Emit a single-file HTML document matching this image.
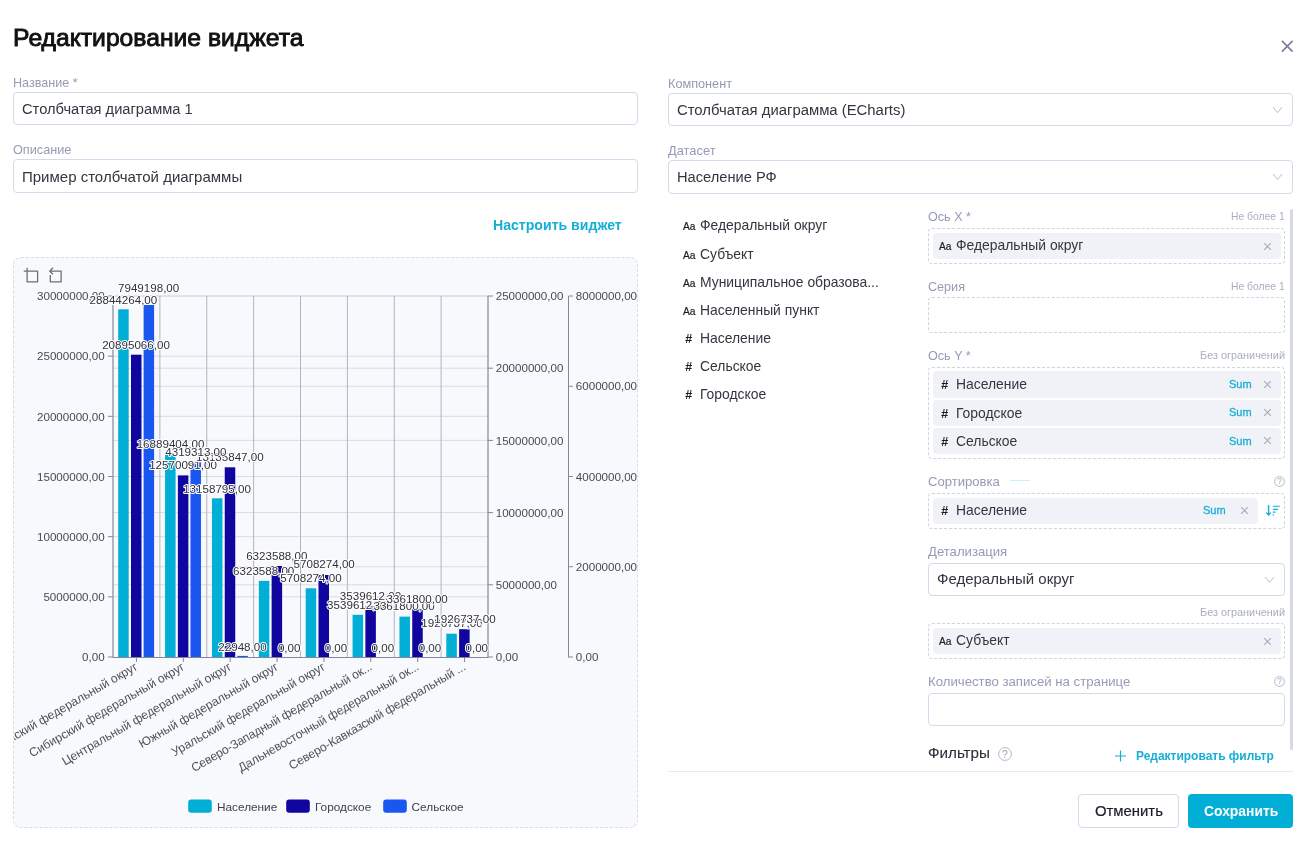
<!DOCTYPE html>
<html><head><meta charset="utf-8"><style>
html,body{margin:0;padding:0;background:#fff;}
body{width:1311px;height:841px;position:relative;overflow:hidden;font-family:"Liberation Sans", sans-serif;}
.t{position:absolute;white-space:pre;line-height:1;font-family:"Liberation Sans", sans-serif;will-change:transform;}
svg{will-change:transform;}
</style></head><body>
<div class="t" style="left:13.40px;top:26px;font-size:24.7px;color:#111111;font-weight:400;-webkit-text-stroke:0.9px #111111;">Редактирование виджета</div>
<svg style="position:absolute;left:1279px;top:38px" width="17" height="17" viewBox="0 0 17 17"><path d="M2.9 2.9L13.6 13.6M13.6 2.9L2.9 13.6" stroke="#737a98" stroke-width="1.5" fill="none"/></svg>
<div class="t" style="left:13.20px;top:77px;font-size:12.6px;color:#959ab6;font-weight:400;">Название *</div>
<div style="position:absolute;left:13px;top:92px;width:625px;height:33px;box-sizing:border-box;border:1px solid #d5d9eb;border-radius:4px;"></div>
<div class="t" style="left:22.00px;top:102px;font-size:14.67px;color:#33363f;font-weight:400;">Столбчатая диаграмма 1</div>
<div class="t" style="left:13.10px;top:144px;font-size:12.69px;color:#959ab6;font-weight:400;">Описание</div>
<div style="position:absolute;left:13px;top:159px;width:625px;height:34px;box-sizing:border-box;border:1px solid #d5d9eb;border-radius:4px;"></div>
<div class="t" style="left:21.60px;top:169px;font-size:15.0px;color:#33363f;font-weight:400;">Пример столбчатой диаграммы</div>
<div class="t" style="left:493.00px;top:218px;font-size:14.1px;color:#16aed6;font-weight:700;">Настроить виджет</div>
<div class="t" style="left:668.20px;top:78px;font-size:12.69px;color:#959ab6;font-weight:400;">Компонент</div>
<div style="position:absolute;left:668px;top:93px;width:625px;height:33px;box-sizing:border-box;border:1px solid #d5d9eb;border-radius:4px;"></div>
<div class="t" style="left:676.50px;top:103px;font-size:14.87px;color:#33363f;font-weight:400;">Столбчатая диаграмма (ECharts)</div>
<svg style="position:absolute;left:1272px;top:105.6px" width="11" height="7.6000000000000085"><path d="M1 1L5.5 6.6000000000000085L10 1" stroke="#b9bdd2" stroke-width="1" fill="none"/></svg>
<div class="t" style="left:668.20px;top:145px;font-size:12.9px;color:#959ab6;font-weight:400;">Датасет</div>
<div style="position:absolute;left:668px;top:160px;width:625px;height:34px;box-sizing:border-box;border:1px solid #d5d9eb;border-radius:4px;"></div>
<div class="t" style="left:676.50px;top:170px;font-size:14.67px;color:#33363f;font-weight:400;">Население РФ</div>
<svg style="position:absolute;left:1272px;top:172.8px" width="11" height="7.599999999999994"><path d="M1 1L5.5 6.599999999999994L10 1" stroke="#b9bdd2" stroke-width="1" fill="none"/></svg>
<div class="t" style="left:683.00px;top:222px;font-size:10.2px;color:#1c1c22;font-weight:400;-webkit-text-stroke:0.2px #1c1c22;">Aa</div>
<div class="t" style="left:699.70px;top:219px;font-size:13.9px;color:#33363f;font-weight:400;">Федеральный округ</div>
<div class="t" style="left:683.00px;top:251px;font-size:10.2px;color:#1c1c22;font-weight:400;-webkit-text-stroke:0.2px #1c1c22;">Aa</div>
<div class="t" style="left:699.70px;top:248px;font-size:13.9px;color:#33363f;font-weight:400;">Субъект</div>
<div class="t" style="left:683.00px;top:279px;font-size:10.2px;color:#1c1c22;font-weight:400;-webkit-text-stroke:0.2px #1c1c22;">Aa</div>
<div class="t" style="left:699.70px;top:276px;font-size:13.9px;color:#33363f;font-weight:400;">Муниципальное образова...</div>
<div class="t" style="left:683.00px;top:307px;font-size:10.2px;color:#1c1c22;font-weight:400;-webkit-text-stroke:0.2px #1c1c22;">Aa</div>
<div class="t" style="left:699.70px;top:304px;font-size:13.9px;color:#33363f;font-weight:400;">Населенный пункт</div>
<div class="t" style="left:685.30px;top:333px;font-size:12.6px;color:#1c1c22;font-weight:700;font-style:italic;">#</div>
<div class="t" style="left:699.70px;top:332px;font-size:13.9px;color:#33363f;font-weight:400;">Население</div>
<div class="t" style="left:685.30px;top:361px;font-size:12.6px;color:#1c1c22;font-weight:700;font-style:italic;">#</div>
<div class="t" style="left:699.70px;top:360px;font-size:13.9px;color:#33363f;font-weight:400;">Сельское</div>
<div class="t" style="left:685.30px;top:389px;font-size:12.6px;color:#1c1c22;font-weight:700;font-style:italic;">#</div>
<div class="t" style="left:699.70px;top:388px;font-size:13.9px;color:#33363f;font-weight:400;">Городское</div>
<div class="t" style="left:928.30px;top:211px;font-size:12.6px;color:#959ab6;font-weight:400;">Ось X *</div>
<div class="t" style="right:26.50px;top:212px;font-size:10.34px;color:#a9adc2;font-weight:400;">Не более 1</div>
<div style="position:absolute;left:928px;top:228px;width:357px;height:36px;box-sizing:border-box;border:1px dashed #cfd3e4;border-radius:4px;"></div>
<div style="position:absolute;left:933px;top:233px;width:348px;height:26px;box-sizing:border-box;background:#f0f2f7;border-radius:4px;"></div>
<div class="t" style="left:939.00px;top:242px;font-size:10.2px;color:#1c1c22;font-weight:400;-webkit-text-stroke:0.2px #1c1c22;">Aa</div>
<div class="t" style="left:955.80px;top:239px;font-size:13.9px;color:#33363f;font-weight:400;">Федеральный округ</div>
<svg style="position:absolute;left:1264px;top:242.5px" width="7" height="7.0" viewBox="0 0 7 7.0"><path d="M0 0L7 7.0M7 0L0 7.0" stroke="#a5a9bf" stroke-width="1.1" fill="none"/></svg>
<div class="t" style="left:928.30px;top:281px;font-size:12.6px;color:#959ab6;font-weight:400;">Серия</div>
<div class="t" style="right:26.50px;top:282px;font-size:10.34px;color:#a9adc2;font-weight:400;">Не более 1</div>
<div style="position:absolute;left:928px;top:297px;width:357px;height:36px;box-sizing:border-box;border:1px dashed #cfd3e4;border-radius:4px;"></div>
<div class="t" style="left:928.30px;top:350px;font-size:12.6px;color:#959ab6;font-weight:400;">Ось Y *</div>
<div class="t" style="right:26.40px;top:350px;font-size:10.89px;color:#a9adc2;font-weight:400;">Без ограничений</div>
<div style="position:absolute;left:928px;top:367px;width:357px;height:91.5px;box-sizing:border-box;border:1px dashed #cfd3e4;border-radius:4px;"></div>
<div style="position:absolute;left:933px;top:371px;width:348px;height:27px;box-sizing:border-box;background:#f0f2f7;border-radius:4px;"></div>
<div class="t" style="left:941.00px;top:379px;font-size:12.6px;color:#1c1c22;font-weight:700;font-style:italic;">#</div>
<div class="t" style="left:955.70px;top:378px;font-size:13.9px;color:#33363f;font-weight:400;">Население</div>
<div class="t" style="left:1229.30px;top:379px;font-size:11px;color:#16aed6;font-weight:400;-webkit-text-stroke:0.3px #16aed6;">Sum</div>
<svg style="position:absolute;left:1264px;top:381px" width="7" height="7" viewBox="0 0 7 7"><path d="M0 0L7 7M7 0L0 7" stroke="#a5a9bf" stroke-width="1.1" fill="none"/></svg>
<div style="position:absolute;left:933px;top:400px;width:348px;height:26px;box-sizing:border-box;background:#f0f2f7;border-radius:4px;"></div>
<div class="t" style="left:941.00px;top:408px;font-size:12.6px;color:#1c1c22;font-weight:700;font-style:italic;">#</div>
<div class="t" style="left:955.70px;top:407px;font-size:13.9px;color:#33363f;font-weight:400;">Городское</div>
<div class="t" style="left:1229.30px;top:407px;font-size:11px;color:#16aed6;font-weight:400;-webkit-text-stroke:0.3px #16aed6;">Sum</div>
<svg style="position:absolute;left:1264px;top:409px" width="7" height="7" viewBox="0 0 7 7"><path d="M0 0L7 7M7 0L0 7" stroke="#a5a9bf" stroke-width="1.1" fill="none"/></svg>
<div style="position:absolute;left:933px;top:428px;width:348px;height:26px;box-sizing:border-box;background:#f0f2f7;border-radius:4px;"></div>
<div class="t" style="left:941.00px;top:436px;font-size:12.6px;color:#1c1c22;font-weight:700;font-style:italic;">#</div>
<div class="t" style="left:955.70px;top:435px;font-size:13.9px;color:#33363f;font-weight:400;">Сельское</div>
<div class="t" style="left:1229.30px;top:436px;font-size:11px;color:#16aed6;font-weight:400;-webkit-text-stroke:0.3px #16aed6;">Sum</div>
<svg style="position:absolute;left:1264px;top:437px" width="7" height="7" viewBox="0 0 7 7"><path d="M0 0L7 7M7 0L0 7" stroke="#a5a9bf" stroke-width="1.1" fill="none"/></svg>
<div class="t" style="left:928.30px;top:475px;font-size:13.1px;color:#959ab6;font-weight:400;">Сортировка</div>
<div style="position:absolute;left:1010.3px;top:480px;width:19.5px;height:1px;box-sizing:border-box;background:#cdeef7;"></div>
<svg style="position:absolute;left:1274px;top:476px" width="11" height="11" viewBox="0 0 11 11"><circle cx="5.5" cy="5.5" r="4.9" stroke="#b3b7c9" stroke-width="1" fill="none"/><text x="5.5" y="8.47" text-anchor="middle" font-family="Liberation Sans" font-size="8.25" fill="#9ea2b8">?</text></svg>
<div style="position:absolute;left:928px;top:493px;width:357px;height:36px;box-sizing:border-box;border:1px dashed #cfd3e4;border-radius:4px;"></div>
<div style="position:absolute;left:933px;top:498px;width:325px;height:26px;box-sizing:border-box;background:#f0f2f7;border-radius:4px;"></div>
<div class="t" style="left:941.00px;top:505px;font-size:12.6px;color:#1c1c22;font-weight:700;font-style:italic;">#</div>
<div class="t" style="left:955.70px;top:504px;font-size:13.9px;color:#33363f;font-weight:400;">Население</div>
<div class="t" style="left:1203.00px;top:505px;font-size:11px;color:#16aed6;font-weight:400;-webkit-text-stroke:0.3px #16aed6;">Sum</div>
<svg style="position:absolute;left:1241px;top:507px" width="7" height="7" viewBox="0 0 7 7"><path d="M0 0L7 7M7 0L0 7" stroke="#a5a9bf" stroke-width="1.1" fill="none"/></svg>
<svg style="position:absolute;left:1265px;top:504px" width="16" height="13" viewBox="0 0 16 13"><path d="M3.6 1V10.8M1.4 8.6L3.6 11L5.8 8.6" stroke="#16aed6" stroke-width="1.4" fill="none"/><path d="M7.9 2.3H14.8M7.9 5.4H13M7.9 8.1H10.6" stroke="#16aed6" stroke-width="1.1" fill="none"/><circle cx="8.3" cy="11" r="0.7" fill="#16aed6"/></svg>
<div class="t" style="left:928.20px;top:545px;font-size:13.13px;color:#959ab6;font-weight:400;">Детализация</div>
<div style="position:absolute;left:928px;top:562.5px;width:357px;height:33.0px;box-sizing:border-box;border:1px solid #d5d9eb;border-radius:4px;"></div>
<div class="t" style="left:936.90px;top:571px;font-size:15.0px;color:#33363f;font-weight:400;">Федеральный округ</div>
<svg style="position:absolute;left:1264px;top:576px" width="11" height="7.2999999999999545"><path d="M1 1L5.5 6.2999999999999545L10 1" stroke="#b9bdd2" stroke-width="1" fill="none"/></svg>
<div class="t" style="right:26.40px;top:607px;font-size:10.89px;color:#a9adc2;font-weight:400;">Без ограничений</div>
<div style="position:absolute;left:928px;top:623px;width:357px;height:35.5px;box-sizing:border-box;border:1px dashed #cfd3e4;border-radius:4px;"></div>
<div style="position:absolute;left:933px;top:628px;width:348px;height:26px;box-sizing:border-box;background:#f0f2f7;border-radius:4px;"></div>
<div class="t" style="left:939.00px;top:637px;font-size:10.2px;color:#1c1c22;font-weight:400;-webkit-text-stroke:0.2px #1c1c22;">Aa</div>
<div class="t" style="left:955.50px;top:634px;font-size:13.9px;color:#33363f;font-weight:400;">Субъект</div>
<svg style="position:absolute;left:1264px;top:637.5px" width="7" height="7.0" viewBox="0 0 7 7.0"><path d="M0 0L7 7.0M7 0L0 7.0" stroke="#a5a9bf" stroke-width="1.1" fill="none"/></svg>
<div class="t" style="left:928.20px;top:675px;font-size:13.2px;color:#959ab6;font-weight:400;">Количество записей на странице</div>
<svg style="position:absolute;left:1274px;top:676.2px" width="11" height="11" viewBox="0 0 11 11"><circle cx="5.5" cy="5.5" r="4.9" stroke="#b3b7c9" stroke-width="1" fill="none"/><text x="5.5" y="8.47" text-anchor="middle" font-family="Liberation Sans" font-size="8.25" fill="#9ea2b8">?</text></svg>
<div style="position:absolute;left:928px;top:693px;width:357px;height:33px;box-sizing:border-box;border:1px solid #d5d9eb;border-radius:4px;"></div>
<div class="t" style="left:928.30px;top:745px;font-size:15.2px;color:#2a2d36;font-weight:400;-webkit-text-stroke:0.1px #2a2d36;">Фильтры</div>
<svg style="position:absolute;left:998px;top:746.5px" width="14" height="14" viewBox="0 0 14 14"><circle cx="7.0" cy="7.0" r="6.4" stroke="#b3b7c9" stroke-width="1" fill="none"/><text x="7.0" y="10.780000000000001" text-anchor="middle" font-family="Liberation Sans" font-size="10.5" fill="#9ea2b8">?</text></svg>
<svg style="position:absolute;left:1114px;top:750px" width="13" height="12" viewBox="0 0 13 12"><path d="M6.5 0.5V11.5M1 6H12" stroke="#16aed6" stroke-width="1.2" fill="none"/></svg>
<div class="t" style="left:1135.60px;top:750px;font-size:11.98px;color:#16aed6;font-weight:700;">Редактировать фильтр</div>
<div style="position:absolute;left:668px;top:771px;width:625px;height:1px;box-sizing:border-box;background:#e8eaf2;"></div>
<div style="position:absolute;left:1290px;top:209px;width:3px;height:541px;box-sizing:border-box;background:#d6d9e9;border-radius:2px;"></div>
<div style="position:absolute;left:1078px;top:794px;width:101px;height:34px;box-sizing:border-box;border:1px solid #d5d9eb;border-radius:4px;background:#fff;"></div>
<div class="t" style="left:1094.50px;top:804px;font-size:14.86px;color:#1c1c2a;font-weight:400;-webkit-text-stroke:0.2px #1c1c2a;">Отменить</div>
<div style="position:absolute;left:1188px;top:794px;width:105px;height:34px;box-sizing:border-box;background:#00aed6;border-radius:4px;"></div>
<div class="t" style="left:1203.60px;top:805px;font-size:13.88px;color:#ffffff;font-weight:700;">Сохранить</div>
<div style="position:absolute;left:13px;top:257px;width:625px;height:571px;box-sizing:border-box;border:1px dashed #d9dce6;border-radius:8px;background:#f8f9fd;"></div>
<div style="position:absolute;left:14px;top:258px;width:623px;height:569px;overflow:hidden;border-radius:7px;will-change:transform;"><svg width="1311" height="841" style="position:absolute;left:-14px;top:-258px" font-family="Liberation Sans"><line x1="113.0" y1="296.0" x2="488.0" y2="296.0" stroke="#c9cbd4" stroke-width="1"/><line x1="113.0" y1="356.17" x2="488.0" y2="356.17" stroke="#d9dbe3" stroke-width="1"/><line x1="113.0" y1="368.2" x2="488.0" y2="368.2" stroke="#d9dbe3" stroke-width="1"/><line x1="113.0" y1="386.25" x2="488.0" y2="386.25" stroke="#d9dbe3" stroke-width="1"/><line x1="113.0" y1="416.33" x2="488.0" y2="416.33" stroke="#d9dbe3" stroke-width="1"/><line x1="113.0" y1="440.4" x2="488.0" y2="440.4" stroke="#d9dbe3" stroke-width="1"/><line x1="113.0" y1="476.5" x2="488.0" y2="476.5" stroke="#d9dbe3" stroke-width="1"/><line x1="113.0" y1="512.6" x2="488.0" y2="512.6" stroke="#d9dbe3" stroke-width="1"/><line x1="113.0" y1="536.67" x2="488.0" y2="536.67" stroke="#d9dbe3" stroke-width="1"/><line x1="113.0" y1="566.75" x2="488.0" y2="566.75" stroke="#d9dbe3" stroke-width="1"/><line x1="113.0" y1="584.8" x2="488.0" y2="584.8" stroke="#d9dbe3" stroke-width="1"/><line x1="113.0" y1="596.83" x2="488.0" y2="596.83" stroke="#d9dbe3" stroke-width="1"/><line x1="159.88" y1="296.0" x2="159.88" y2="657.0" stroke="#b3b5bf" stroke-width="1"/><line x1="206.75" y1="296.0" x2="206.75" y2="657.0" stroke="#b3b5bf" stroke-width="1"/><line x1="253.62" y1="296.0" x2="253.62" y2="657.0" stroke="#b3b5bf" stroke-width="1"/><line x1="300.50" y1="296.0" x2="300.50" y2="657.0" stroke="#b3b5bf" stroke-width="1"/><line x1="347.38" y1="296.0" x2="347.38" y2="657.0" stroke="#b3b5bf" stroke-width="1"/><line x1="394.25" y1="296.0" x2="394.25" y2="657.0" stroke="#b3b5bf" stroke-width="1"/><line x1="441.12" y1="296.0" x2="441.12" y2="657.0" stroke="#b3b5bf" stroke-width="1"/><rect x="118.20" y="309.3" width="10.5" height="347.70" fill="#00aed6"/><rect x="131.00" y="354.7" width="10.5" height="302.30" fill="#10059f"/><rect x="143.60" y="305.0" width="10.5" height="352.00" fill="#1a57f0"/><rect x="165.07" y="454.9" width="10.5" height="202.10" fill="#00aed6"/><rect x="177.88" y="475.4" width="10.5" height="181.60" fill="#10059f"/><rect x="190.47" y="462.3" width="10.5" height="194.70" fill="#1a57f0"/><rect x="211.95" y="498.3" width="10.5" height="158.70" fill="#00aed6"/><rect x="224.75" y="467.3" width="10.5" height="189.70" fill="#10059f"/><rect x="237.35" y="655.9" width="10.5" height="1.10" fill="#1a57f0"/><rect x="258.82" y="580.9" width="10.5" height="76.10" fill="#00aed6"/><rect x="271.62" y="566.0" width="10.5" height="91.00" fill="#10059f"/><rect x="305.70" y="588.3" width="10.5" height="68.70" fill="#00aed6"/><rect x="318.50" y="575.0" width="10.5" height="82.00" fill="#10059f"/><rect x="352.57" y="614.8" width="10.5" height="42.20" fill="#00aed6"/><rect x="365.38" y="606.5" width="10.5" height="50.50" fill="#10059f"/><rect x="399.45" y="616.6" width="10.5" height="40.40" fill="#00aed6"/><rect x="412.25" y="608.8" width="10.5" height="48.20" fill="#10059f"/><rect x="446.32" y="633.7" width="10.5" height="23.30" fill="#00aed6"/><rect x="459.12" y="629.2" width="10.5" height="27.80" fill="#10059f"/><line x1="113.0" y1="296.0" x2="113.0" y2="657.5" stroke="#84879a" stroke-width="1.2"/><line x1="108.0" y1="296.00" x2="113.0" y2="296.00" stroke="#84879a" stroke-width="1"/><line x1="108.0" y1="356.17" x2="113.0" y2="356.17" stroke="#84879a" stroke-width="1"/><line x1="108.0" y1="416.33" x2="113.0" y2="416.33" stroke="#84879a" stroke-width="1"/><line x1="108.0" y1="476.50" x2="113.0" y2="476.50" stroke="#84879a" stroke-width="1"/><line x1="108.0" y1="536.67" x2="113.0" y2="536.67" stroke="#84879a" stroke-width="1"/><line x1="108.0" y1="596.83" x2="113.0" y2="596.83" stroke="#84879a" stroke-width="1"/><line x1="108.0" y1="657.00" x2="113.0" y2="657.00" stroke="#84879a" stroke-width="1"/><line x1="488.0" y1="296.0" x2="488.0" y2="657.5" stroke="#84879a" stroke-width="1.2"/><line x1="488.0" y1="296.00" x2="493.0" y2="296.00" stroke="#84879a" stroke-width="1"/><line x1="488.0" y1="368.20" x2="493.0" y2="368.20" stroke="#84879a" stroke-width="1"/><line x1="488.0" y1="440.40" x2="493.0" y2="440.40" stroke="#84879a" stroke-width="1"/><line x1="488.0" y1="512.60" x2="493.0" y2="512.60" stroke="#84879a" stroke-width="1"/><line x1="488.0" y1="584.80" x2="493.0" y2="584.80" stroke="#84879a" stroke-width="1"/><line x1="488.0" y1="657.00" x2="493.0" y2="657.00" stroke="#84879a" stroke-width="1"/><line x1="568.5" y1="296.0" x2="568.5" y2="657.5" stroke="#84879a" stroke-width="1"/><line x1="568.5" y1="296.00" x2="573.0" y2="296.00" stroke="#84879a" stroke-width="1"/><line x1="568.5" y1="386.25" x2="573.0" y2="386.25" stroke="#84879a" stroke-width="1"/><line x1="568.5" y1="476.50" x2="573.0" y2="476.50" stroke="#84879a" stroke-width="1"/><line x1="568.5" y1="566.75" x2="573.0" y2="566.75" stroke="#84879a" stroke-width="1"/><line x1="568.5" y1="657.00" x2="573.0" y2="657.00" stroke="#84879a" stroke-width="1"/><line x1="113.0" y1="657.5" x2="488.0" y2="657.5" stroke="#84879a" stroke-width="1.2"/><line x1="136.44" y1="657.0" x2="136.44" y2="662.0" stroke="#84879a" stroke-width="1"/><line x1="183.31" y1="657.0" x2="183.31" y2="662.0" stroke="#84879a" stroke-width="1"/><line x1="230.19" y1="657.0" x2="230.19" y2="662.0" stroke="#84879a" stroke-width="1"/><line x1="277.06" y1="657.0" x2="277.06" y2="662.0" stroke="#84879a" stroke-width="1"/><line x1="323.94" y1="657.0" x2="323.94" y2="662.0" stroke="#84879a" stroke-width="1"/><line x1="370.81" y1="657.0" x2="370.81" y2="662.0" stroke="#84879a" stroke-width="1"/><line x1="417.69" y1="657.0" x2="417.69" y2="662.0" stroke="#84879a" stroke-width="1"/><line x1="464.56" y1="657.0" x2="464.56" y2="662.0" stroke="#84879a" stroke-width="1"/><text x="104.70" y="300.00" text-anchor="end" fill="#474b57" font-size="11.6" >30000000,00</text><text x="104.70" y="360.00" text-anchor="end" fill="#474b57" font-size="11.6" >25000000,00</text><text x="104.70" y="421.00" text-anchor="end" fill="#474b57" font-size="11.6" >20000000,00</text><text x="104.70" y="481.00" text-anchor="end" fill="#474b57" font-size="11.6" >15000000,00</text><text x="104.70" y="541.00" text-anchor="end" fill="#474b57" font-size="11.6" >10000000,00</text><text x="104.70" y="601.00" text-anchor="end" fill="#474b57" font-size="11.6" >5000000,00</text><text x="104.70" y="661.00" text-anchor="end" fill="#474b57" font-size="11.6" >0,00</text><text x="495.70" y="300.00" text-anchor="start" fill="#474b57" font-size="11.6" >25000000,00</text><text x="495.70" y="372.00" text-anchor="start" fill="#474b57" font-size="11.6" >20000000,00</text><text x="495.70" y="445.00" text-anchor="start" fill="#474b57" font-size="11.6" >15000000,00</text><text x="495.70" y="517.00" text-anchor="start" fill="#474b57" font-size="11.6" >10000000,00</text><text x="495.70" y="589.00" text-anchor="start" fill="#474b57" font-size="11.6" >5000000,00</text><text x="495.70" y="661.00" text-anchor="start" fill="#474b57" font-size="11.6" >0,00</text><text x="575.80" y="300.00" text-anchor="start" fill="#474b57" font-size="11.6" >8000000,00</text><text x="575.80" y="390.00" text-anchor="start" fill="#474b57" font-size="11.6" >6000000,00</text><text x="575.80" y="481.00" text-anchor="start" fill="#474b57" font-size="11.6" >4000000,00</text><text x="575.80" y="571.00" text-anchor="start" fill="#474b57" font-size="11.6" >2000000,00</text><text x="575.80" y="661.00" text-anchor="start" fill="#474b57" font-size="11.6" >0,00</text><text x="0" y="4.1" text-anchor="end" fill="#4e525d" font-size="12.2" transform="translate(136.44,665.5) rotate(-30)">Приволжский федеральный округ</text><text x="0" y="4.1" text-anchor="end" fill="#4e525d" font-size="12.2" transform="translate(183.31,665.5) rotate(-30)">Сибирский федеральный округ</text><text x="0" y="4.1" text-anchor="end" fill="#4e525d" font-size="12.2" transform="translate(230.19,665.5) rotate(-30)">Центральный федеральный округ</text><text x="0" y="4.1" text-anchor="end" fill="#4e525d" font-size="12.2" transform="translate(277.06,665.5) rotate(-30)">Южный федеральный округ</text><text x="0" y="4.1" text-anchor="end" fill="#4e525d" font-size="12.2" transform="translate(323.94,665.5) rotate(-30)">Уральский федеральный округ</text><text x="0" y="4.1" text-anchor="end" fill="#4e525d" font-size="12.2" textLength="206.4" lengthAdjust="spacing" transform="translate(370.81,665.5) rotate(-30)">Северо-Западный федеральный ок...</text><text x="0" y="4.1" text-anchor="end" fill="#4e525d" font-size="12.2" textLength="206.3" lengthAdjust="spacing" transform="translate(417.69,665.5) rotate(-30)">Дальневосточный федеральный ок...</text><text x="0" y="4.1" text-anchor="end" fill="#4e525d" font-size="12.2" textLength="201.8" lengthAdjust="spacing" transform="translate(464.56,665.5) rotate(-30)">Северо-Кавказский федеральный ...</text><text x="123.40" y="303.70" text-anchor="middle" fill="#303238" font-size="11.6" stroke="#ffffff" stroke-width="2" paint-order="stroke" stroke-linejoin="round">28844264,00</text><text x="170.50" y="447.60" text-anchor="middle" fill="#303238" font-size="11.6" stroke="#ffffff" stroke-width="2" paint-order="stroke" stroke-linejoin="round">16889404,00</text><text x="217.00" y="492.60" text-anchor="middle" fill="#303238" font-size="11.6" stroke="#ffffff" stroke-width="2" paint-order="stroke" stroke-linejoin="round">13158795,00</text><text x="263.70" y="575.00" text-anchor="middle" fill="#303238" font-size="11.6" stroke="#ffffff" stroke-width="2" paint-order="stroke" stroke-linejoin="round">6323588,00</text><text x="311.00" y="582.40" text-anchor="middle" fill="#303238" font-size="11.6" stroke="#ffffff" stroke-width="2" paint-order="stroke" stroke-linejoin="round">5708274,00</text><text x="357.75" y="608.70" text-anchor="middle" fill="#303238" font-size="11.6" stroke="#ffffff" stroke-width="2" paint-order="stroke" stroke-linejoin="round">3539612,00</text><text x="404.10" y="609.90" text-anchor="middle" fill="#303238" font-size="11.6" stroke="#ffffff" stroke-width="2" paint-order="stroke" stroke-linejoin="round">3361800,00</text><text x="452.00" y="627.40" text-anchor="middle" fill="#303238" font-size="11.6" stroke="#ffffff" stroke-width="2" paint-order="stroke" stroke-linejoin="round">1926737,00</text><text x="136.00" y="348.60" text-anchor="middle" fill="#303238" font-size="11.6" stroke="#ffffff" stroke-width="2" paint-order="stroke" stroke-linejoin="round">20895066,00</text><text x="183.00" y="469.20" text-anchor="middle" fill="#303238" font-size="11.6" stroke="#ffffff" stroke-width="2" paint-order="stroke" stroke-linejoin="round">12570091,00</text><text x="229.85" y="460.60" text-anchor="middle" fill="#303238" font-size="11.6" stroke="#ffffff" stroke-width="2" paint-order="stroke" stroke-linejoin="round">13135847,00</text><text x="276.80" y="560.00" text-anchor="middle" fill="#303238" font-size="11.6" stroke="#ffffff" stroke-width="2" paint-order="stroke" stroke-linejoin="round">6323588,00</text><text x="324.20" y="568.30" text-anchor="middle" fill="#303238" font-size="11.6" stroke="#ffffff" stroke-width="2" paint-order="stroke" stroke-linejoin="round">5708274,00</text><text x="370.50" y="599.50" text-anchor="middle" fill="#303238" font-size="11.6" stroke="#ffffff" stroke-width="2" paint-order="stroke" stroke-linejoin="round">3539612,00</text><text x="417.20" y="602.60" text-anchor="middle" fill="#303238" font-size="11.6" stroke="#ffffff" stroke-width="2" paint-order="stroke" stroke-linejoin="round">3361800,00</text><text x="465.00" y="623.30" text-anchor="middle" fill="#303238" font-size="11.6" stroke="#ffffff" stroke-width="2" paint-order="stroke" stroke-linejoin="round">1926737,00</text><text x="148.65" y="291.80" text-anchor="middle" fill="#303238" font-size="11.6" stroke="#ffffff" stroke-width="2" paint-order="stroke" stroke-linejoin="round">7949198,00</text><text x="195.90" y="455.70" text-anchor="middle" fill="#303238" font-size="11.6" stroke="#ffffff" stroke-width="2" paint-order="stroke" stroke-linejoin="round">4319313,00</text><text x="242.50" y="650.80" text-anchor="middle" fill="#303238" font-size="11.6" stroke="#ffffff" stroke-width="2" paint-order="stroke" stroke-linejoin="round">22948,00</text><text x="289.20" y="651.50" text-anchor="middle" fill="#303238" font-size="11.6" stroke="#ffffff" stroke-width="2" paint-order="stroke" stroke-linejoin="round">0,00</text><text x="336.00" y="651.50" text-anchor="middle" fill="#303238" font-size="11.6" stroke="#ffffff" stroke-width="2" paint-order="stroke" stroke-linejoin="round">0,00</text><text x="382.90" y="651.50" text-anchor="middle" fill="#303238" font-size="11.6" stroke="#ffffff" stroke-width="2" paint-order="stroke" stroke-linejoin="round">0,00</text><text x="430.00" y="651.50" text-anchor="middle" fill="#303238" font-size="11.6" stroke="#ffffff" stroke-width="2" paint-order="stroke" stroke-linejoin="round">0,00</text><text x="476.80" y="651.50" text-anchor="middle" fill="#303238" font-size="11.6" stroke="#ffffff" stroke-width="2" paint-order="stroke" stroke-linejoin="round">0,00</text><rect x="188.2" y="799.6" width="23.6" height="13.2" rx="3" fill="#00aed6"/><text x="217.00" y="810.90" text-anchor="start" fill="#3f424c" font-size="11.8" >Население</text><rect x="286.2" y="799.6" width="23.6" height="13.2" rx="3" fill="#10059f"/><text x="315.00" y="810.90" text-anchor="start" fill="#3f424c" font-size="11.8" >Городское</text><rect x="383.2" y="799.6" width="23.6" height="13.2" rx="3" fill="#1a57f0"/><text x="411.60" y="810.90" text-anchor="start" fill="#3f424c" font-size="11.8" >Сельское</text><path d="M23.7 271.2H37.6V281.8H27.1V267.7" stroke="#707070" stroke-width="1.3" fill="none" stroke-linejoin="round"/><path d="M50.3 275V281.8H61.1V271.2H50M52.9 267.7L49.8 271.2L52.9 274.3" stroke="#707070" stroke-width="1.3" fill="none" stroke-linejoin="round"/></svg></div>
</body></html>
